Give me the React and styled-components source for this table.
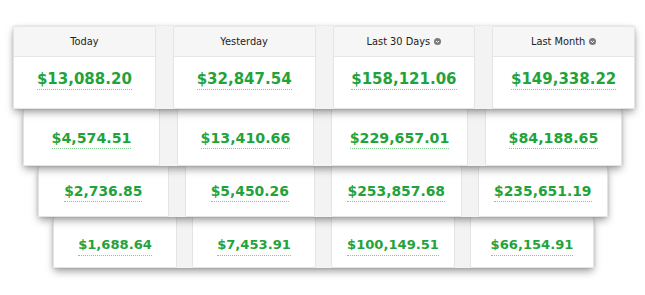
import React from "react";
import styled, { createGlobalStyle } from "styled-components";

const GlobalStyle = createGlobalStyle`
  html, body {
    margin: 0;
    padding: 0;
    background: #ffffff;
  }
  body {
    font-family: "DejaVu Sans", Verdana, sans-serif;
  }
`;

const Page = styled.div`
  width: 645px;
  height: 295px;
  padding-top: 26px;
  box-sizing: border-box;
  overflow: hidden;
  display: flex;
  flex-direction: column;
`;

const Panel = styled.div`
  position: relative;
  z-index: ${(p) => p.$z};
  width: ${(p) => p.$w}px;
  height: ${(p) => p.$h}px;
  margin-left: ${(p) => p.$ml}px;
  display: grid;
  grid-template-columns: repeat(4, 1fr);
  column-gap: ${(p) => p.$gap}px;
  background: #f3f3f3;
  box-shadow: 0 4px 8px -1px rgba(0, 0, 0, 0.4), 0 0 3px rgba(0, 0, 0, 0.12);
`;

const Card = styled.div`
  display: flex;
  flex-direction: column;
  background: #ffffff;
  border: 1px solid #e4e4e4;
  border-top: ${(p) => (p.$top ? "1px solid #e4e4e4" : "none")};
  border-radius: 2px;
  box-sizing: border-box;
`;

const Header = styled.div`
  height: 30px;
  flex: none;
  display: flex;
  align-items: center;
  justify-content: center;
  gap: 4px;
  background: #f6f6f6;
  border-bottom: 1px solid #e6e6e6;
  box-sizing: border-box;
  color: #222222;
  font-size: 9.8px;
`;

const Body = styled.div`
  flex: 1;
  display: flex;
  align-items: center;
  justify-content: center;
  padding-top: ${(p) => p.$pt}px;
  padding-bottom: ${(p) => p.$pb}px;
`;

const Amount = styled.span`
  display: inline-block;
  font-family: "DejaVu Sans", Verdana, sans-serif;
  font-weight: bold;
  font-size: ${(p) => p.$size}px;
  line-height: 18px;
  color: #1fa33a;
  padding-bottom: 1px;
  border-bottom: 1px dotted #7fcc8e;
`;

const Chevron = () => (
  <svg width="7" height="7" viewBox="0 0 10 10" aria-hidden="true">
    <circle cx="5" cy="5" r="5" fill="#7a7a7a" />
    <path d="M2.8 4.2 L5 6.3 L7.2 4.2" stroke="#ffffff" strokeWidth="1.4" fill="none" />
  </svg>
);

const heads = [
  { label: "Today" },
  { label: "Yesterday" },
  { label: "Last 30 Days", menu: true },
  { label: "Last Month", menu: true },
];

const rows = [
  {
    values: ["$13,088.20", "$32,847.54", "$158,121.06", "$149,338.22"],
    w: 622, ml: 13, gap: 17, h: 83, size: 15, pt: 0, pb: 5, head: true,
  },
  {
    values: ["$4,574.51", "$13,410.66", "$229,657.01", "$84,188.65"],
    w: 599, ml: 23, gap: 17, h: 57, size: 14.2, pt: 3, pb: 0,
  },
  {
    values: ["$2,736.85", "$5,450.26", "$253,857.68", "$235,651.19"],
    w: 570, ml: 38, gap: 16, h: 51, size: 13.9, pt: 2, pb: 0,
  },
  {
    values: ["$1,688.64", "$7,453.91", "$100,149.51", "$66,154.91"],
    w: 541, ml: 53, gap: 15, h: 51, size: 13.1, pt: 7, pb: 0,
  },
];

export default function App() {
  return (
    <>
      <GlobalStyle />
      <Page>
        {rows.map((row, i) => (
          <Panel
            key={i}
            $z={10 - i}
            $w={row.w}
            $ml={row.ml}
            $h={row.h}
            $gap={row.gap}
          >
            {row.values.map((v, j) => (
              <Card key={j} $top={row.head}>
                {row.head && (
                  <Header>
                    {heads[j].label}
                    {heads[j].menu && <Chevron />}
                  </Header>
                )}
                <Body $pt={row.pt} $pb={row.pb}>
                  <Amount $size={row.size}>{v}</Amount>
                </Body>
              </Card>
            ))}
          </Panel>
        ))}
      </Page>
    </>
  );
}
